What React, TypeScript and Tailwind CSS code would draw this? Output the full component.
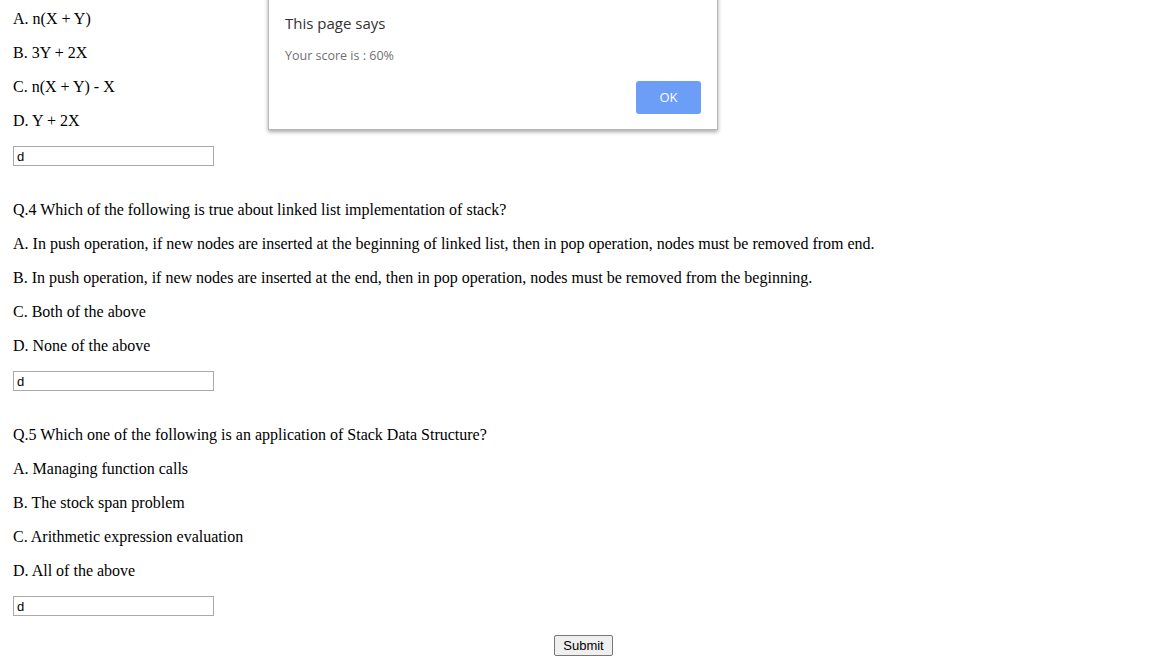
const questions = [
  {
    q: null,
    options: ['A. n(X + Y)', 'B. 3Y + 2X', 'C. n(X + Y) - X', 'D. Y + 2X'],
  },
  {
    q: 'Q.4 Which of the following is true about linked list implementation of stack?',
    options: [
      'A. In push operation, if new nodes are inserted at the beginning of linked list, then in pop operation, nodes must be removed from end.',
      'B. In push operation, if new nodes are inserted at the end, then in pop operation, nodes must be removed from the beginning.',
      'C. Both of the above',
      'D. None of the above',
    ],
  },
  {
    q: 'Q.5 Which one of the following is an application of Stack Data Structure?',
    options: [
      'A. Managing function calls',
      'B. The stock span problem',
      'C. Arithmetic expression evaluation',
      'D. All of the above',
    ],
  },
];

function AnswerBox() {
  return (
    <input
      type="text"
      defaultValue="d"
      className="block w-[201px] h-[20px] border border-[#a9a9a9] bg-white px-[3px] text-[13px] text-black outline-none font-['Liberation_Sans',Arial,sans-serif]"
    />
  );
}

export default function App() {
  return (
    <div className="relative w-[1151px] h-[663px] overflow-hidden bg-white font-['Liberation_Serif','Times_New_Roman',serif] text-[16px] text-black">
      <div className="flex flex-col pl-[13px] pt-[10px]">
        {questions.map((item, i) => (
          <div key={i} className={i === 0 ? '' : 'mt-[35px]'}>
            {item.q && <p className="leading-[18px] mb-[16px]">{item.q}</p>}
            {item.options.map(o => (
              <p key={o} className="leading-[18px] mb-[16px]">
                {o}
              </p>
            ))}
            <AnswerBox />
          </div>
        ))}
        <div className="flex justify-center pl-[3px] mt-[19px]">
          <button className="h-[21px] px-[8px] border border-[#767676] rounded-[2px] bg-[#efefef] text-[13px] leading-none text-black font-['Liberation_Sans',Arial,sans-serif]">
            Submit
          </button>
        </div>
      </div>

      <div className="absolute left-[268px] top-[-10px] w-[450px] h-[140px] bg-white border border-[#b8b8b8] shadow-[0_2px_4px_rgba(0,0,0,0.35)] font-['Open_Sans','Noto_Sans',sans-serif]">
        <div className="flex flex-col pl-[16px] pr-[16px] pt-[22px]">
          <div className="text-[15px] leading-[20px] text-[#333333]">This page says</div>
          <div className="mt-[14px] text-[12.5px] leading-[18px] text-[#707070]">Your score is : 60%</div>
          <div className="flex justify-end mt-[16px]">
            <button className="w-[65px] h-[33px] rounded-[3px] bg-[#6c9ef8] text-[13px] text-white">OK</button>
          </div>
        </div>
      </div>
    </div>
  );
}
